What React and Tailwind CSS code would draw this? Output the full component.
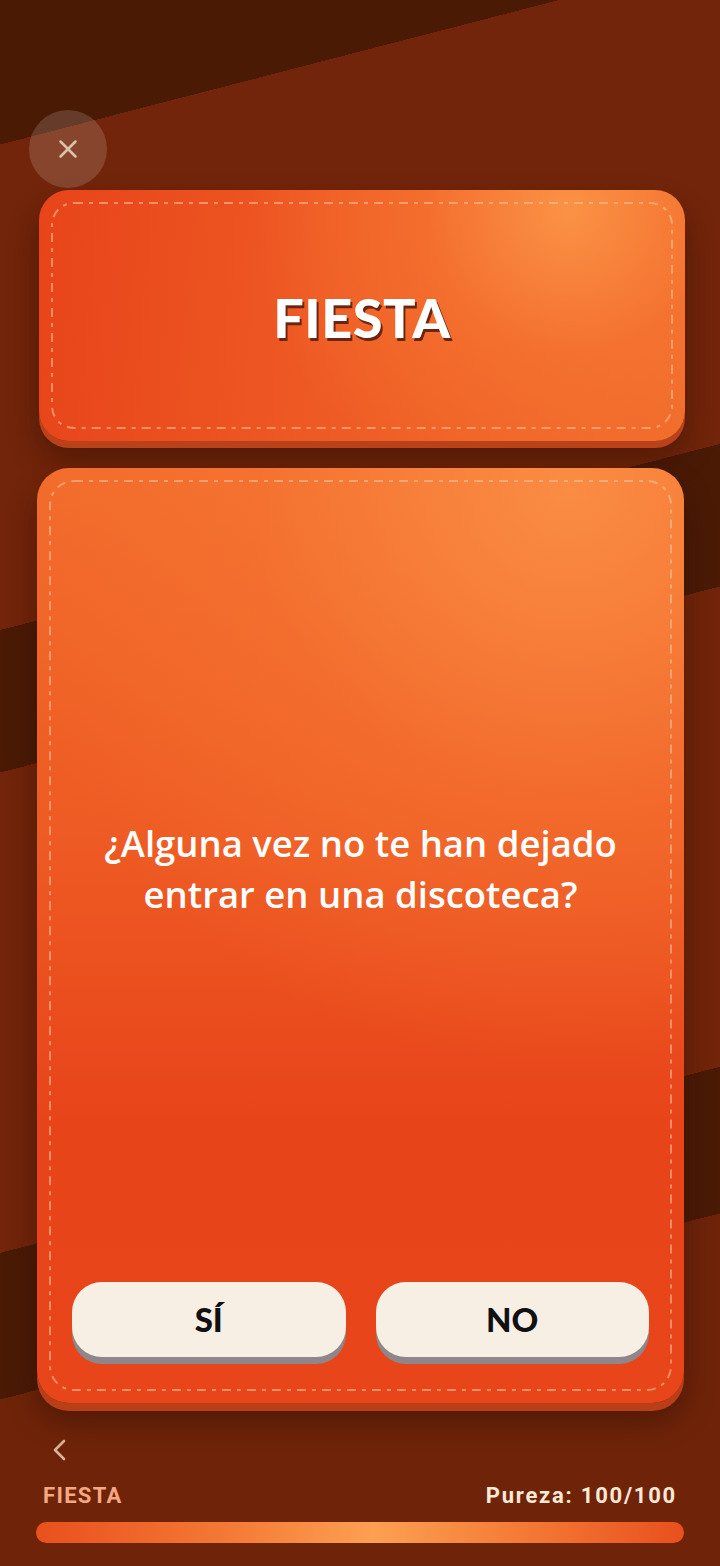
import { X } from 'lucide-react';

function Stitch({ radius = 22 }) {
    return (
        <svg className="pointer-events-none absolute inset-[13px] h-[calc(100%-26px)] w-[calc(100%-26px)] overflow-visible">
            <rect
                x="0"
                y="0"
                width="100%"
                height="100%"
                rx={radius}
                ry={radius}
                fill="none"
                stroke="rgba(255,200,160,0.55)"
                strokeWidth="2"
                strokeDasharray="9 6 4 6"
            />
        </svg>
    );
}

function AnswerButton({ label }) {
    return (
        <button
            type="button"
            className="flex h-[75px] flex-1 items-center justify-center rounded-[30px] bg-[#f7efe4] text-[33px] font-black text-[#111] shadow-[0_7px_0_#8f868b] [font-family:Lato,'Open_Sans',sans-serif]"
        >
            {label}
        </button>
    );
}

export default function App() {
    return (
        <div className="relative flex h-[1566px] w-full flex-col overflow-hidden bg-[linear-gradient(165.5deg,#4a1a05_0px_140px,#72250a_140px_610px,#4a1a05_610px_748px,#72250a_748px_1213px,#4a1a05_1213px_1355px,#6f2409_1355px)]">
            <div className="pl-[29px] pt-[110px]">
                <button
                    type="button"
                    className="flex h-[78px] w-[78px] items-center justify-center rounded-full bg-white/15"
                >
                    <X size={30} strokeWidth={2} color="#dcc2aa" />
                </button>
            </div>

            <div className="relative ml-[39px] mr-[35px] mt-[2px] flex h-[251px] items-center justify-center rounded-[30px] bg-[radial-gradient(circle_at_82%_8%,#fb9246_0%,rgba(247,120,50,0.6)_25%,transparent_55%),linear-gradient(95deg,#e8441a_0%,#ee5a24_45%,#f06a2b_100%)] shadow-[0_7px_0_#b9421a,0_18px_30px_rgba(40,10,0,0.45)]">
                <Stitch radius={22} />
                <h1 className="pt-1 text-[54px] leading-none font-black tracking-[0.01em] text-white [font-family:Lato,'Open_Sans',sans-serif] [text-shadow:2px_3px_0_#6b2410]">
                    FIESTA
                </h1>
            </div>

            <div className="relative ml-[37px] mr-[36px] mt-[27px] flex h-[935px] flex-col rounded-[32px] bg-[radial-gradient(circle_at_82%_2%,#fa8c43_0%,rgba(246,120,52,0.5)_30%,transparent_55%),linear-gradient(180deg,#f26b2b_0%,#ee5a23_40%,#e8441a_70%,#e8451a_100%)] shadow-[0_8px_0_#b93f18,0_18px_30px_rgba(40,10,0,0.45)]">
                <Stitch radius={24} />
                <div className="flex flex-1 items-center justify-center px-[40px] pb-[12px]">
                    <p className="text-center text-[36.5px] leading-[51px] font-semibold text-white [font-family:'Open_Sans',Lato,sans-serif]">
                        ¿Alguna vez no te han dejado entrar en una discoteca?
                    </p>
                </div>
                <div className="flex gap-[30px] px-[35px] pb-[46px]">
                    <AnswerButton label="SÍ" />
                    <AnswerButton label="NO" />
                </div>
            </div>

            <div className="mt-[36px] pl-[52px]">
                <svg width="14" height="22" viewBox="0 0 14 22" fill="none">
                    <path
                        d="M12 2 L3 11 L12 20"
                        stroke="#d9b39a"
                        strokeWidth="2.6"
                        strokeLinecap="round"
                        strokeLinejoin="round"
                    />
                </svg>
            </div>

            <div className="mt-[22px] flex items-center justify-between px-[43px] text-[22px] leading-[26px] font-bold [font-family:Roboto,'Liberation_Sans',sans-serif]">
                <span className="tracking-[0.06em] text-[#f4a882]">FIESTA</span>
                <span className="tracking-[0.08em] text-[#fbe9d6]">Pureza: 100/100</span>
            </div>

            <div className="mx-[36px] mt-[13px] h-[21px] rounded-full bg-[linear-gradient(90deg,#e9501c_0%,#f47a36_30%,#fca052_52%,#f47a36_75%,#e8501c_100%)]" />
        </div>
    );
}
